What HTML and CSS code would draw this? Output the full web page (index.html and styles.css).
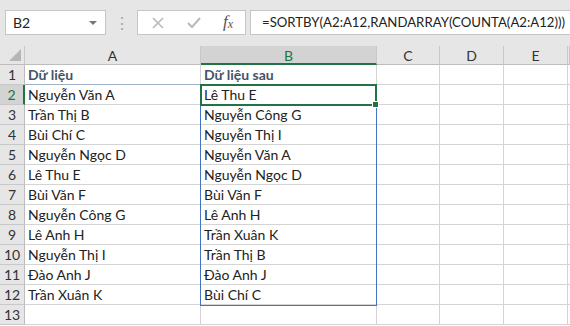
FILE: index.html
```html
<!DOCTYPE html>
<html lang="vi">

<head>
    <meta charset="UTF-8">
    <title>SORTBY RANDARRAY</title>
    <link rel="stylesheet" href="styles.css">
</head>

<body>

    <div class="toolbar">
        <div class="name-box">
            <span>B2</span>
            <span class="drop"></span>
        </div>
        <div class="dots">⋮</div>
        <div class="fx-buttons">
            <svg class="btn" width="14" height="14" viewBox="0 0 14 14">
                <path d="M2 2 L12 12 M12 2 L2 12" stroke="#b9b9b9" stroke-width="1.6" fill="none" />
            </svg>
            <svg class="btn" width="16" height="14" viewBox="0 0 16 14">
                <path d="M2 7 L6 11 L14 2" stroke="#b9b9b9" stroke-width="2" fill="none" />
            </svg>
            <span class="fx">f<sub>x</sub></span>
        </div>
        <div class="formula">=SORTBY(A2:A12,RANDARRAY(COUNTA(A2:A12)))</div>
    </div>

    <div class="sheet">
        <div class="grid" id="grid"></div>
        <div class="spill"></div>
        <div class="active"><span class="handle"></span></div>
    </div>

    <script>
        const colA = ["Dữ liệu", "Nguyễn Văn A", "Trần Thị B", "Bùi Chí C", "Nguyễn Ngọc D", "Lê Thu E",
            "Bùi Văn F", "Nguyễn Công G", "Lê Anh H", "Nguyễn Thị I", "Đào Anh J", "Trần Xuân K", ""];
        const colB = ["Dữ liệu sau", "Lê Thu E", "Nguyễn Công G", "Nguyễn Thị I", "Nguyễn Văn A", "Nguyễn Ngọc D",
            "Bùi Văn F", "Lê Anh H", "Trần Xuân K", "Trần Thị B", "Đào Anh J", "Bùi Chí C", ""];
        const grid = document.getElementById('grid');

        function addCell(cls, text) {
            const cell = document.createElement('div');
            cell.className = cls;
            cell.textContent = text;
            grid.appendChild(cell);
        }

        // header row
        addCell('corner', '');
        ['A', 'B', 'C', 'D', 'E', ''].forEach(function (c) {
            addCell(c === 'B' ? 'col-head selected' : 'col-head', c);
        });

        for (let i = 0; i < colA.length; i++) {
            const row = i + 1;
            addCell(row === 2 ? 'row-head selected' : 'row-head', row);
            addCell(row === 1 ? 'cell head-a' : 'cell', colA[i]);
            addCell(row === 1 ? 'cell bold' : 'cell', colB[i]);
            addCell('cell', '');
            addCell('cell', '');
            addCell('cell', '');
            addCell('cell', '');
        }
    </script>

</body>

</html>
```

FILE: styles.css
```css
body {
    margin: 0;
    width: 570px;
    height: 326px;
    overflow: hidden;
    background-color: #fff;
    font-family: Lato, "Liberation Sans", sans-serif;
    color: #222;
}

.toolbar {
    height: 46px;
    background-color: #e6e6e6;
    display: flex;
    align-items: flex-start;
    padding-top: 10px;
    box-sizing: border-box;
}

.name-box {
    margin-left: 5px;
    width: 101px;
    height: 25px;
    box-sizing: border-box;
    background-color: #fff;
    border: 1px solid #c6c6c6;
    display: flex;
    align-items: center;
    justify-content: space-between;
    padding: 0 8px 0 7px;
    font-size: 14px;
}

.drop {
    width: 0;
    height: 0;
    border-left: 4px solid transparent;
    border-right: 4px solid transparent;
    border-top: 4px solid #777;
}

.dots {
    width: 31px;
    text-align: center;
    color: #a8a8a8;
    font-size: 16px;
    line-height: 25px;
}

.fx-buttons {
    width: 109px;
    height: 25px;
    box-sizing: border-box;
    background-color: #fff;
    border: 1px solid #c6c6c6;
    display: flex;
    align-items: center;
    padding-left: 13px;
}

.btn {
    margin-right: 21px;
}

.fx {
    font-family: "Liberation Serif", serif;
    font-style: italic;
    font-size: 17px;
    color: #555;
    line-height: 20px;
}

.fx sub {
    font-size: 12px;
    vertical-align: -1px;
}

.formula {
    margin-left: 4px;
    flex: 1;
    min-width: 0;
    height: 25px;
    box-sizing: border-box;
    background-color: #fff;
    border: 1px solid #c6c6c6;
    border-right: none;
    padding-left: 11px;
    font-size: 13.2px;
    line-height: 23px;
    white-space: nowrap;
    overflow: hidden;
}

.sheet {
    position: relative;
    overflow: hidden;
}

.grid {
    display: grid;
    grid-template-columns: 25px 176px 176px 63px 64px 64px 2px;
    grid-template-rows: 19px;
    grid-auto-rows: 20px;
}

.grid div {
    box-sizing: border-box;
    white-space: nowrap;
    overflow: hidden;
}

.corner {
    background-color: #e6e6e6;
    border-right: 1px solid #c8c8c8;
    border-bottom: 1px solid #bdbdbd;
    position: relative;
}

.corner::after {
    content: "";
    position: absolute;
    right: 3px;
    bottom: 3px;
    border-left: 12px solid transparent;
    border-bottom: 12px solid #b5b5b5;
}

.col-head {
    background-color: #e6e6e6;
    border-right: 1px solid #c8c8c8;
    border-bottom: 1px solid #bdbdbd;
    text-align: center;
    font-size: 14px;
    line-height: 19px;
    color: #333;
}

.col-head.selected {
    background-color: #d3d3d3;
    border-bottom: 2px solid #217346;
    color: #217346;
}

.row-head {
    background-color: #e6e6e6;
    border-right: 1px solid #bdbdbd;
    border-bottom: 1px solid #c8c8c8;
    text-align: center;
    font-size: 14px;
    line-height: 20px;
    color: #333;
}

.row-head.selected {
    background-color: #d3d3d3;
    border-right: 2px solid #217346;
    color: #217346;
}

.cell {
    border-right: 1px solid #d4d4d4;
    border-bottom: 1px solid #d4d4d4;
    font-size: 14px;
    line-height: 20px;
    padding-left: 3px;
}

.head-a,
.bold {
    font-weight: bold;
    color: #44546a;
}

.head-a {
    border-bottom-color: #9fb0c8;
}

.spill {
    position: absolute;
    left: 200px;
    top: 39px;
    width: 177px;
    height: 221px;
    box-sizing: border-box;
    border: 1px solid #4472c4;
}

.active {
    position: absolute;
    left: 200px;
    top: 38px;
    width: 177px;
    height: 22px;
    box-sizing: border-box;
    border: 2px solid #217346;
}

.handle {
    position: absolute;
    right: -4px;
    bottom: -4px;
    width: 5px;
    height: 5px;
    background-color: #217346;
    border: 1px solid #fff;
}
```
